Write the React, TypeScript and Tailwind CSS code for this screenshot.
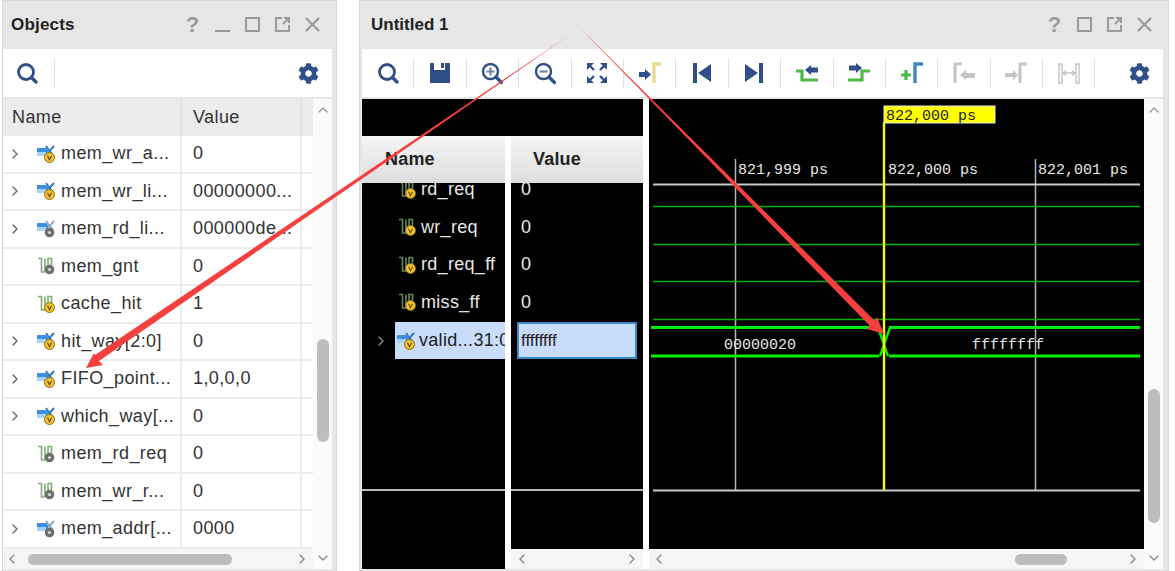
import { ChevronDown, ChevronLeft, ChevronRight, ChevronUp } from "lucide-react";
import { FaCog } from "react-icons/fa";
import type { ReactNode } from "react";

const NAVY = "#2f4f86";
const GREEN = "#4cb848";
const GREY = "#c4c4c4";

type Badge = "yellow" | "grey";

const BadgeMark = ({ kind }: { kind: Badge }) =>
  kind === "yellow" ? (
    <>
      <circle cx="12.500" cy="12.500" r="5" fill="#f2c230" stroke="#8a6a10" strokeWidth="1" />
      <path d="M10.500 10.800 12.500 14.800 14.500 10.800" fill="none" stroke="#5e4a08" strokeWidth="1.100" />
    </>
  ) : (
    <>
      <circle cx="12.500" cy="12.500" r="4.800" fill="#6e6e6e" />
      <circle cx="12.500" cy="12.500" r="1.600" fill="#d8d8d8" />
    </>
  );

const BusIcon = ({ badge }: { badge: Badge }) => (
  <svg width="18" height="18" viewBox="0 0 18 18" className="shrink-0">
    <path d="M0 3h9l3 3-2 4H0z" fill="#3f8fe0" />
    <path d="M0 7h9v4H0z" fill="#a9d0f5" />
    <path d="M9 1l3.500 5L17 1M12.500 6 16 10" fill="none" stroke={badge === "yellow" ? "#2b78c8" : "#8aa6c4"} strokeWidth="1.900" />
    <BadgeMark kind={badge} />
  </svg>
);

const SignalIcon = ({ badge, dark }: { badge: Badge; dark?: boolean }) => (
  <svg width="18" height="18" viewBox="0 0 18 18" className="shrink-0">
    <path d="M1 1.500h3.500V15H8M8 15V1.500M11 9V1.500h3.500V8" fill="none" stroke={dark ? "#5f8a55" : "#7fae74"} strokeWidth="1.600" />
    <BadgeMark kind={badge} />
  </svg>
);

const Search = () => (
  <svg width="24" height="24" viewBox="0 0 24 24">
    <circle cx="11" cy="11" r="7.500" fill="none" stroke={NAVY} strokeWidth="2.800" />
    <path d="M16.500 16.500 21 21" stroke={NAVY} strokeWidth="3.400" strokeLinecap="round" />
  </svg>
);

const Zoom = ({ plus }: { plus?: boolean }) => (
  <svg width="24" height="24" viewBox="0 0 24 24">
    <circle cx="10.500" cy="10.500" r="7.500" fill="none" stroke={NAVY} strokeWidth="2.400" />
    <path d="M16 16 21.500 21.500" stroke={NAVY} strokeWidth="3.200" strokeLinecap="round" />
    <path d={plus ? "M6.500 10.500h8M10.500 6.500v8" : "M6.500 10.500h8"} stroke="#6f86ad" strokeWidth="2.200" />
  </svg>
);

const Save = () => (
  <svg width="24" height="24" viewBox="0 0 24 24">
    <path d="M2 2h4v7h11V2h5v20H2z" fill={NAVY} />
    <path d="M13 2h3v5h-3z" fill={NAVY} />
  </svg>
);

const Fit = () => (
  <svg width="24" height="24" viewBox="0 0 24 24" fill={NAVY} stroke={NAVY}>
    <path d="M2 2h7l-7 7zM22 2h-7l7 7zM2 22h7l-7-7zM22 22h-7l7-7z" stroke="none" />
    <path d="M4 4l5 5M20 4l-5 5M4 20l5-5M20 20l-5-5" strokeWidth="2.400" />
  </svg>
);

const GoMarker = () => (
  <svg width="24" height="24" viewBox="0 0 24 24">
    <path d="M1 11h6V8l6 5.500L7 19v-3H1z" fill={NAVY} />
    <path d="M16 22V3h7" fill="none" stroke="#ecd98a" strokeWidth="3.400" />
  </svg>
);

const Skip = ({ next }: { next?: boolean }) => (
  <svg width="24" height="24" viewBox="0 0 24 24" fill={NAVY}>
    {next ? <path d="M3 3l13 9-13 9zM17 2h4v20h-4z" /> : <path d="M21 3 8 12l13 9zM3 2h4v20H3z" />}
  </svg>
);

const EdgeBack = () => (
  <svg width="24" height="24" viewBox="0 0 24 24">
    <path d="M1 10h6v9h16" fill="none" stroke={GREEN} strokeWidth="3.200" />
    <path d="M10 9l6-5v2.500h7v5h-7V14z" fill={NAVY} />
  </svg>
);

const EdgeForward = () => (
  <svg width="24" height="24" viewBox="0 0 24 24">
    <path d="M1 19h14v-9h8" fill="none" stroke={GREEN} strokeWidth="3.200" />
    <path d="M2 4.500h7V2l6 5-6 5V9.500H2z" fill={NAVY} />
  </svg>
);

const AddMarker = () => (
  <svg width="24" height="24" viewBox="0 0 24 24">
    <path d="M1 14h10M6 9v10" stroke={GREEN} strokeWidth="3.200" />
    <path d="M15 22V3h8" fill="none" stroke="#3f86c0" strokeWidth="3.400" />
  </svg>
);

const PrevMarkerOff = () => (
  <svg width="24" height="24" viewBox="0 0 24 24">
    <path d="M3 22V3h7" fill="none" stroke={GREY} strokeWidth="3" />
    <path d="M8 14l6-5v3h9v5h-9v2z" fill={GREY} />
  </svg>
);

const NextMarkerOff = () => (
  <svg width="24" height="24" viewBox="0 0 24 24">
    <path d="M1 12h8V9l5 5-5 5v-3H1z" fill={GREY} />
    <path d="M16 22V3h7" fill="none" stroke={GREY} strokeWidth="3" />
  </svg>
);

const DeltaOff = () => (
  <svg width="24" height="24" viewBox="0 0 24 24">
    <path d="M2 3h3v19H2zM19 3h3v19h-3z" fill="none" stroke={GREY} strokeWidth="1.400" />
    <path d="M6 12h12M9 9.500 6 12l3 2.500M15 9.500l3 2.500-3 2.500" fill="none" stroke={GREY} strokeWidth="1.400" />
  </svg>
);

const WindowButtons = ({ minimize }: { minimize?: boolean }) => (
  <div className="flex items-center gap-[11px] text-[#9a9a9a]">
    <span className="w-[19px] text-center text-[22px] leading-none font-bold">?</span>
    {minimize && (
      <svg width="19" height="19" viewBox="0 0 19 19">
        <path d="M2 16h15" stroke="currentColor" strokeWidth="2" />
      </svg>
    )}
    <svg width="19" height="19" viewBox="0 0 19 19">
      <rect x="3" y="3" width="13" height="13" fill="none" stroke="currentColor" strokeWidth="2" />
    </svg>
    <svg width="19" height="19" viewBox="0 0 19 19">
      <path d="M9 3H3v13h13v-6M10 9l6-6M11 3h5v5" fill="none" stroke="currentColor" strokeWidth="2" />
    </svg>
    <svg width="19" height="19" viewBox="0 0 19 19">
      <path d="M3 3l13 13M16 3 3 16" fill="none" stroke="currentColor" strokeWidth="2.200" />
    </svg>
  </div>
);

const objects: { name: string; value: string; bus: boolean; badge: Badge }[] = [
  { name: "mem_wr_a...", value: "0", bus: true, badge: "yellow" },
  { name: "mem_wr_li...", value: "00000000...", bus: true, badge: "yellow" },
  { name: "mem_rd_li...", value: "000000de...", bus: true, badge: "grey" },
  { name: "mem_gnt", value: "0", bus: false, badge: "grey" },
  { name: "cache_hit", value: "1", bus: false, badge: "yellow" },
  { name: "hit_way[2:0]", value: "0", bus: true, badge: "yellow" },
  { name: "FIFO_point...", value: "1,0,0,0", bus: true, badge: "yellow" },
  { name: "which_way[...", value: "0", bus: true, badge: "yellow" },
  { name: "mem_rd_req", value: "0", bus: false, badge: "grey" },
  { name: "mem_wr_r...", value: "0", bus: false, badge: "grey" },
  { name: "mem_addr[...", value: "0000", bus: true, badge: "grey" },
];

const ObjectRow = ({ name, value, bus, badge }: (typeof objects)[number]) => (
  <div className="flex h-[37.5px] border-b-2 border-[#ececec] text-[18px] tracking-[0.4px] text-[#333]">
    <div className="flex w-[179px] items-center border-r-2 border-[#ececec] pl-[4px]">
      <span className="w-[30px] shrink-0">
        {bus && <ChevronRight size={16} strokeWidth={2} className="text-[#666]" />}
      </span>
      {bus ? <BusIcon badge={badge} /> : <SignalIcon badge={badge} />}
      <span className="ml-[6px] whitespace-nowrap">{name}</span>
    </div>
    <div className="flex w-[120px] items-center border-r-2 border-[#ececec] pl-[11px] whitespace-nowrap">{value}</div>
  </div>
);

const ObjectsPanel = () => (
  <div className="flex h-[571px] w-[335px] shrink-0 flex-col border-x border-t border-[#d8d8d8] bg-[#e6e6e6]">
    <div className="flex h-[48px] shrink-0 items-center justify-between pr-[14px] pl-[8px] pb-[1px]">
      <span className="text-[17px] font-bold tracking-[0.2px] text-[#222]">Objects</span>
      <WindowButtons minimize />
    </div>
    <div className="mr-[4px] flex h-[48px] shrink-0 items-center justify-between bg-white pr-[13px] pl-[12px]">
      <div className="flex items-center">
        <Search />
        <div className="ml-[15px] h-[30px] w-px bg-[#e0e0e0]" />
      </div>
      <FaCog size={21} color={NAVY} />
    </div>
    <div className="mt-[2px] mr-[4px] mb-[2px] flex min-h-0 flex-1 bg-white">
      <div className="flex w-[310px] flex-col">
        <div className="flex h-[37px] shrink-0 bg-[#ececec] text-[18px] tracking-[0.4px] text-[#333]">
          <div className="flex w-[179px] items-center border-r-2 border-[#e2e2e2] pl-[9px]">Name</div>
          <div className="flex w-[120px] items-center border-r-2 border-[#e2e2e2] pl-[11px]">Value</div>
        </div>
        <div className="flex-1">
          {objects.map((o) => (
            <ObjectRow key={o.name} {...o} />
          ))}
        </div>
        <div className="flex h-[20px] shrink-0 items-center bg-[#f5f5f5] pl-[1px]">
          <ChevronLeft size={16} className="text-[#888]" />
          <div className="ml-[8px] h-[11px] w-[204px] rounded-full bg-[#bdbdbd]" />
          <ChevronRight size={16} className="ml-[62px] text-[#888]" />
        </div>
      </div>
      <VerticalScroll thumbTop={221} thumbHeight={103} />
    </div>
  </div>
);

const VerticalScroll = ({ thumbTop, thumbHeight }: { thumbTop: number; thumbHeight: number }) => (
  <div className="flex w-[19px] flex-col items-center bg-[#fbfbfb] pt-[3px] pb-[3px]">
    <ChevronUp size={16} className="shrink-0 text-[#999]" />
    <div className="flex-1">
      <div className="w-[12px] rounded-full bg-[#bdbdbd]" style={{ marginTop: thumbTop, height: thumbHeight }} />
    </div>
    <ChevronDown size={16} className="shrink-0 text-[#888]" />
  </div>
);

const Tool = ({ children }: { children: ReactNode }) => (
  <div className="flex h-[30px] w-[52.4px] shrink-0 items-center justify-center border-r border-[#e0e0e0]">{children}</div>
);

const signals = [
  { name: "rd_req", value: "0" },
  { name: "wr_req", value: "0" },
  { name: "rd_req_ff", value: "0" },
  { name: "miss_ff", value: "0" },
];

const WaveHeaderCell = ({ label, className }: { label: string; className: string }) => (
  <div className={`flex h-[47px] shrink-0 items-center bg-gradient-to-b from-[#f5f5f5] to-[#dddddd] text-[18px] font-bold tracking-[0.2px] text-[#222] ${className}`}>
    {label}
  </div>
);

const NameColumn = () => (
  <div className="flex w-[143px] shrink-0 flex-col bg-black">
    <WaveHeaderCell label="Name" className="pl-[23px]" />
    <div className="h-[308px] shrink-0 overflow-hidden border-b-2 border-[#b8b8b8] text-[18px] tracking-[0.3px] text-[#e8e8e8]">
      <div className="-mt-[12px]">
        {signals.map((s) => (
          <div key={s.name} className="flex h-[37.5px] items-center pl-[36px]">
            <SignalIcon badge="yellow" dark />
            <span className="ml-[5px] whitespace-nowrap">{s.name}</span>
          </div>
        ))}
        <div className="mt-[1px] flex h-[37px] items-center">
          <ChevronRight size={16} className="ml-[11px] shrink-0 text-[#888]" />
          <div className="ml-[6px] flex h-[37px] flex-1 items-center overflow-hidden bg-[#c8dcfb] pl-[2px] text-[#222]">
            <BusIcon badge="yellow" />
            <span className="ml-[4px] whitespace-nowrap">valid...31:0]</span>
          </div>
        </div>
      </div>
    </div>
  </div>
);

const ValueColumn = () => (
  <div className="flex w-[132px] shrink-0 flex-col">
    <div className="flex h-[413px] shrink-0 flex-col bg-black">
      <WaveHeaderCell label="Value" className="pl-[22px]" />
      <div className="h-[308px] shrink-0 overflow-hidden border-b-2 border-[#b8b8b8] text-[18px] text-[#e8e8e8]">
        <div className="-mt-[12px]">
          {signals.map((s) => (
            <div key={s.name} className="flex h-[37.5px] items-center pl-[10px]">
              {s.value}
            </div>
          ))}
          <div className="mt-[1px] ml-[6px] flex h-[37px] w-[120px] items-center border-2 border-[#3f88c5] bg-[#c8dcfb] pl-[2px] text-[17px] text-[#222]">
            ffffffff
          </div>
        </div>
      </div>
    </div>
    <div className="flex h-[20px] items-center justify-between bg-[#f5f5f5] px-[3px]">
      <ChevronLeft size={16} className="text-[#888]" />
      <ChevronRight size={16} className="text-[#888]" />
    </div>
  </div>
);

const Waveform = () => (
  <svg width="495" height="450" viewBox="649 99 495 450" className="block bg-black" fontFamily="'Liberation Mono', monospace" fontSize="15">
    <path d="M735.500 159v331M1035.500 159v331" stroke="#b5b5b5" strokeWidth="1.500" />
    <path d="M653 184.500h487M653 490.500h487" stroke="#c8c8c8" strokeWidth="1.800" />
    <path d="M653 206.500h487M653 244.500h487M653 281.500h487M653 319.500h487" stroke="#00b400" strokeWidth="1.400" />
    <path d="M651 327.500h228M889 327.500h251M651 356h228M889 356h251" fill="none" stroke="#00ee00" strokeWidth="2.800" />
    <path d="M878 327.500 888 356M890 327.500 880 356" fill="none" stroke="#00ee00" strokeWidth="2.400" />
    <text x="738" y="174" fill="#e8e8e8">821,999 ps</text>
    <text x="888" y="174" fill="#e8e8e8">822,000 ps</text>
    <text x="1038" y="174" fill="#e8e8e8">822,001 ps</text>
    <text x="724" y="349" fill="#e8e8e8">00000020</text>
    <text x="972" y="349" fill="#e8e8e8">ffffffff</text>
    <path d="M884 122v368" stroke="#f7f700" strokeWidth="2.400" />
    <rect x="884" y="106" width="111" height="17" fill="#ffff00" stroke="#e8e8e8" />
    <text x="886" y="120" fill="#222">822,000 ps</text>
  </svg>
);

const WavePanel = () => (
  <div className="flex h-[571px] w-[810px] shrink-0 flex-col border-x border-t border-[#d8d8d8] bg-[#e6e6e6]">
    <div className="flex h-[48px] shrink-0 items-center justify-between pr-[14px] pl-[11px] pb-[1px]">
      <span className="text-[17px] font-bold text-[#222]">Untitled 1</span>
      <WindowButtons />
    </div>
    <div className="mr-[5px] ml-[2px] flex h-[48px] shrink-0 items-center bg-white">
      <Tool><Search /></Tool>
      <Tool><Save /></Tool>
      <Tool><Zoom plus /></Tool>
      <Tool><Zoom /></Tool>
      <Tool><Fit /></Tool>
      <Tool><GoMarker /></Tool>
      <Tool><Skip /></Tool>
      <Tool><Skip next /></Tool>
      <Tool><EdgeBack /></Tool>
      <Tool><EdgeForward /></Tool>
      <Tool><AddMarker /></Tool>
      <Tool><PrevMarkerOff /></Tool>
      <Tool><NextMarkerOff /></Tool>
      <Tool><DeltaOff /></Tool>
      <div className="ml-auto pr-[13px]">
        <FaCog size={21} color={NAVY} />
      </div>
    </div>
    <div className="mt-[2px] mr-[5px] mb-[2px] ml-[2px] flex min-h-0 flex-1 bg-white">
      <div className="flex w-[281px] shrink-0 flex-col">
        <div className="h-[37px] shrink-0 bg-black" />
        <div className="flex min-h-0 flex-1 gap-[6px]">
          <NameColumn />
          <ValueColumn />
        </div>
      </div>
      <div className="w-[6px] shrink-0" />
      <div className="flex w-[495px] shrink-0 flex-col">
        <Waveform />
        <div className="flex h-[20px] items-center bg-[#f5f5f5] pl-[2px]">
          <ChevronLeft size={16} className="text-[#888]" />
          <div className="ml-[348px] h-[11px] w-[52px] rounded-full bg-[#bdbdbd]" />
          <ChevronRight size={16} className="ml-[58px] text-[#888]" />
        </div>
      </div>
      <VerticalScroll thumbTop={271} thumbHeight={134} />
    </div>
  </div>
);

const Annotations = () => (
  <svg width="1175" height="571" viewBox="0 0 1175 571" className="pointer-events-none absolute inset-0">
    <defs>
      <linearGradient id="tail" gradientUnits="userSpaceOnUse" x1="580" y1="28" x2="530" y2="62">
        <stop offset="0" stopColor="#f63f3f" stopOpacity="0.15" />
        <stop offset="1" stopColor="#f63f3f" />
      </linearGradient>
    </defs>
    <polygon points="580,28 99,360.900 103,365 86,368 94,353 95,355.100" fill="url(#tail)" />
    <polygon points="580,28 874.500,320.500 877,317 884,334 867,329 869.500,325.500" fill="#f63f3f" />
  </svg>
);

export default function App() {
  return (
    <div className="relative flex h-[571px] w-[1175px] overflow-hidden bg-white font-['Liberation_Sans',sans-serif]">
      <div className="ml-[2px]">
        <ObjectsPanel />
      </div>
      <div className="ml-[22px]">
        <WavePanel />
      </div>
      <Annotations />
    </div>
  );
}
